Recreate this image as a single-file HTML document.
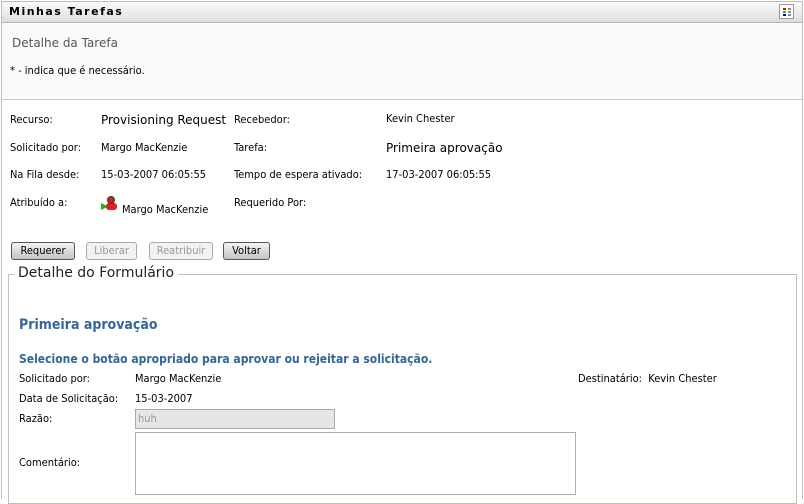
<!DOCTYPE html>
<html><head><meta charset="utf-8"><style>
*{margin:0;padding:0;box-sizing:border-box}
body{width:804px;height:499px;overflow:hidden;background:#fff;font-family:"DejaVu Sans Condensed","Liberation Sans",sans-serif;font-size:11px;color:#000;position:relative}
.a{position:absolute;white-space:nowrap}
.lg{font-family:"DejaVu Sans","Liberation Sans",sans-serif;font-size:12px}
.btn{position:absolute;top:242px;height:18px;border:1px solid #555;border-radius:3px;background:linear-gradient(#f4f4f4,#d6d6d6 60%,#c4c4c4);font-size:11px;text-align:center;line-height:16px}
.dis{border-color:#aaa;color:#999;background:#f2f2f2}
.blue{color:#336699;font-weight:bold;font-family:"DejaVu Sans Condensed","Liberation Sans",sans-serif}
</style></head><body>
<div class="a" style="left:1px;top:1px;width:802px;height:498px;border:1px solid #bdbdbd;border-bottom:none"></div>
<div class="a" style="left:2px;top:2px;width:800px;height:21px;background:linear-gradient(#fbfbfb,#dcdedc);border-bottom:1px solid #b5b5b5"></div>
<div class="a" style="left:9px;top:5px;font-weight:bold;font-size:11px;letter-spacing:1.5px;font-family:'DejaVu Sans','Liberation Sans',sans-serif">Minhas Tarefas</div>
<div class="a" style="left:779px;top:4px;width:15px;height:15px;border:1px solid #999;background:#fff">
<div class="a" style="left:3px;top:3px;width:3px;height:2px;background:#e00"></div>
<div class="a" style="left:3px;top:6px;width:3px;height:2px;background:#0d0"></div>
<div class="a" style="left:3px;top:9px;width:3px;height:2px;background:#00e"></div>
<div class="a" style="left:8px;top:3px;width:3px;height:2px;background:#888"></div>
<div class="a" style="left:8px;top:6px;width:3px;height:2px;background:#888"></div>
<div class="a" style="left:8px;top:9px;width:3px;height:2px;background:#888"></div>
</div>
<div class="a" style="left:2px;top:24px;width:800px;height:76px;background:#fafaf8;border-bottom:1px solid #c8c8c8"></div>
<div class="a lg" style="left:12px;top:36px;color:#555">Detalhe da Tarefa</div>
<div class="a" style="left:10px;top:64px">* - indica que é necessário.</div>

<div class="a" style="left:10px;top:113px">Recurso:</div>
<div class="a lg" style="left:101px;top:113px">Provisioning Request</div>
<div class="a" style="left:234px;top:113px">Recebedor:</div>
<div class="a" style="left:386px;top:112px">Kevin Chester</div>
<div class="a" style="left:10px;top:141px">Solicitado por:</div>
<div class="a" style="left:101px;top:141px">Margo MacKenzie</div>
<div class="a" style="left:234px;top:141px">Tarefa:</div>
<div class="a lg" style="left:386px;top:141px">Primeira aprovação</div>
<div class="a" style="left:10px;top:168px">Na Fila desde:</div>
<div class="a" style="left:101px;top:168px">15-03-2007 06:05:55</div>
<div class="a" style="left:234px;top:168px">Tempo de espera ativado:</div>
<div class="a" style="left:386px;top:168px">17-03-2007 06:05:55</div>
<div class="a" style="left:10px;top:196px">Atribuído a:</div>
<svg class="a" style="left:101px;top:195px" width="18" height="16"><polygon points="0,8 0,15 7,11.5" fill="#2a2"/><rect x="5" y="8" width="11" height="7" rx="3" fill="#d22"/><circle cx="10" cy="5" r="3.5" fill="#c22" stroke="#333" stroke-width="1"/></svg>
<div class="a" style="left:122px;top:203px">Margo MacKenzie</div>
<div class="a" style="left:234px;top:196px">Requerido Por:</div>

<div class="btn" style="left:11px;width:64px">Requerer</div>
<div class="btn dis" style="left:86px;width:51px">Liberar</div>
<div class="btn dis" style="left:149px;width:64px">Reatribuir</div>
<div class="btn" style="left:223px;width:47px">Voltar</div>

<div class="a" style="left:8px;top:274px;width:789px;height:230px;border:1px solid #c0c0b8"></div>
<div class="a" style="left:14px;top:265px;padding:0 4px;background:#fff;font-size:14px;font-family:'DejaVu Sans','Liberation Sans',sans-serif;color:#222">Detalhe do Formulário</div>
<div class="a blue" style="left:19px;top:317px;font-size:14px">Primeira aprovação</div>
<div class="a blue" style="left:19px;top:352px;font-size:12px">Selecione o botão apropriado para aprovar ou rejeitar a solicitação.</div>
<div class="a" style="left:19px;top:372px">Solicitado por:</div>
<div class="a" style="left:135px;top:372px">Margo MacKenzie</div>
<div class="a" style="left:578px;top:372px">Destinatário:&nbsp; Kevin Chester</div>
<div class="a" style="left:19px;top:392px">Data de Solicitação:</div>
<div class="a" style="left:135px;top:392px">15-03-2007</div>
<div class="a" style="left:19px;top:412px">Razão:</div>
<div class="a" style="left:135px;top:409px;width:200px;height:20px;background:#e6e6e6;border:1px solid #aaa;color:#999;padding:2px 2px;line-height:14px">huh</div>
<div class="a" style="left:135px;top:432px;width:441px;height:63px;border:1px solid #a8b0b8;background:#fff"></div>
<div class="a" style="left:19px;top:456px">Comentário:</div>
</body></html>
